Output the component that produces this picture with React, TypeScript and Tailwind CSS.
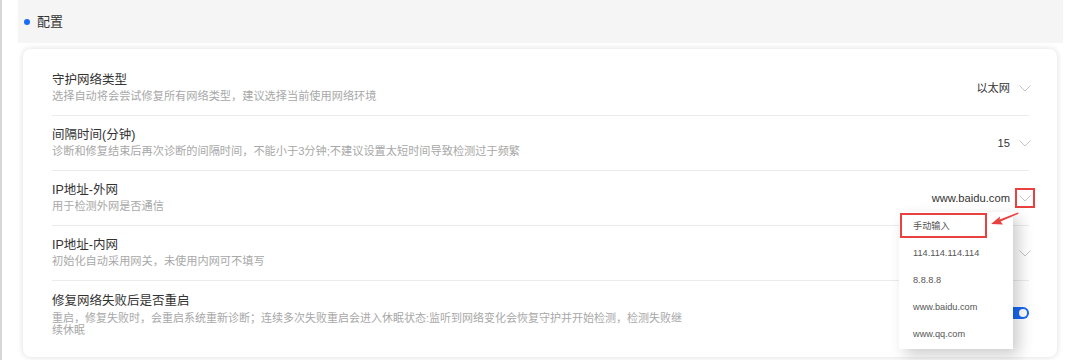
import React from "react";

const FONT = { fontFamily: '"Liberation Sans", "Noto Sans CJK SC", sans-serif' };

interface Setting {
  title: string;
  desc: React.ReactNode;
  value?: string;
  toggle?: boolean;
  highlight?: boolean;
}

const settings: Setting[] = [
  { title: "守护网络类型", desc: "选择自动将会尝试修复所有网络类型，建议选择当前使用网络环境", value: "以太网" },
  {
    title: "间隔时间(分钟)",
    desc: "诊断和修复结束后再次诊断的间隔时间，不能小于3分钟;不建议设置太短时间导致检测过于频繁",
    value: "15",
  },
  { title: "IP地址-外网", desc: "用于检测外网是否通信", value: "www.baidu.com", highlight: true },
  { title: "IP地址-内网", desc: "初始化自动采用网关，未使用内网可不填写", value: "" },
  {
    title: "修复网络失败后是否重启",
    desc: (
      <>
        重启，修复失败时，会重启系统重新诊断；连续多次失败重启会进入休眠状态:监听到网络变化会恢复守护并开始检测，检测失败继
        <br />
        续休眠
      </>
    ),
    toggle: true,
  },
];

const options = ["手动输入", "114.114.114.114", "8.8.8.8", "www.baidu.com", "www.qq.com"];

const Chevron = () => (
  <svg width="12" height="7" viewBox="0 0 12 7" fill="none">
    <polyline points="0.5,0.5 6,6 11.5,0.5" stroke="#c4c4c4" strokeWidth="1" />
  </svg>
);

const Row: React.FC<{ s: Setting; last: boolean }> = ({ s, last }) => (
  <div className={last ? "" : "border-b border-[#ebebeb]"}>
    <div className={s.toggle ? "flex items-start justify-between pt-[12px] pb-[11px]" : "flex items-center justify-between py-[11px]"}>
      <div>
        <div className="text-[12.5px] leading-[16px] text-[#333]">{s.title}</div>
        <div className={s.toggle ? "mt-[3px] text-[11px] leading-[12px] text-[#a8a8a8]" : "text-[11.2px] leading-[16px] text-[#a8a8a8]"}>
          {s.desc}
        </div>
      </div>
      {s.toggle ? (
        <div className="mt-[14px] flex h-[12px] w-[26px] items-center justify-end rounded-full bg-[#1769f5] pr-[2px]">
          <div className="h-[8px] w-[8px] rounded-full bg-white" />
        </div>
      ) : (
        <div className="flex items-center">
          <span className="text-[11.2px] leading-[16px] text-[#333]">{s.value}</span>
          <div
            className={
              s.highlight
                ? "ml-[5px] -mr-[6px] flex h-[20px] w-[20px] items-center justify-center border-2 border-[#e8413f]"
                : "ml-[5px] -mr-[6px] flex h-[20px] w-[20px] items-center justify-center"
            }
          >
            <Chevron />
          </div>
        </div>
      )}
    </div>
  </div>
);

export default function App() {
  return (
    <div className="relative flex h-[360px] w-[1080px] overflow-hidden bg-white" style={FONT}>
      <div className="w-[18px] border-l-2 border-[#d6d6d6]" />
      <div className="flex-1">
        <div className="mr-[17px] flex h-[43px] items-center bg-[#f5f5f5] pl-[6px]">
          <span className="h-[6px] w-[6px] rounded-full bg-[#1a6cf6]" />
          <span className="ml-[7px] text-[13px] text-[#333]">配置</span>
        </div>
        <div className="ml-[5px] mt-[6px] h-[308px] w-[1034px] rounded-[8px] bg-white pl-[29px] pr-[28px] pt-[12px] shadow-[0_0_6px_rgba(0,0,0,0.14)]">
          {settings.map((s, i) => (
            <Row key={i} s={s} last={i === settings.length - 1} />
          ))}
        </div>
      </div>

      {/* dropdown menu */}
      <div className="absolute left-[899px] top-[212px] w-[114px] bg-white py-[1px] shadow-[6px_6px_14px_rgba(0,0,0,0.2)]">
        {options.map((o) => (
          <div key={o} className="flex h-[27px] items-center pl-[14px] text-[9.2px] text-[#555]">
            {o}
          </div>
        ))}
      </div>
      <div className="absolute left-[900px] top-[213px] h-[25px] w-[87px] border-2 border-[#e8413f]" />

      {/* annotation arrow */}
      <svg className="absolute left-[988px] top-[207px]" width="34" height="22" viewBox="0 0 34 22">
        <polygon points="3,17 12,9.5 11.6,12.6 30,5.5 30.6,6.8 12.6,14.4 15,17.4" fill="#e8413f" />
      </svg>
    </div>
  );
}
